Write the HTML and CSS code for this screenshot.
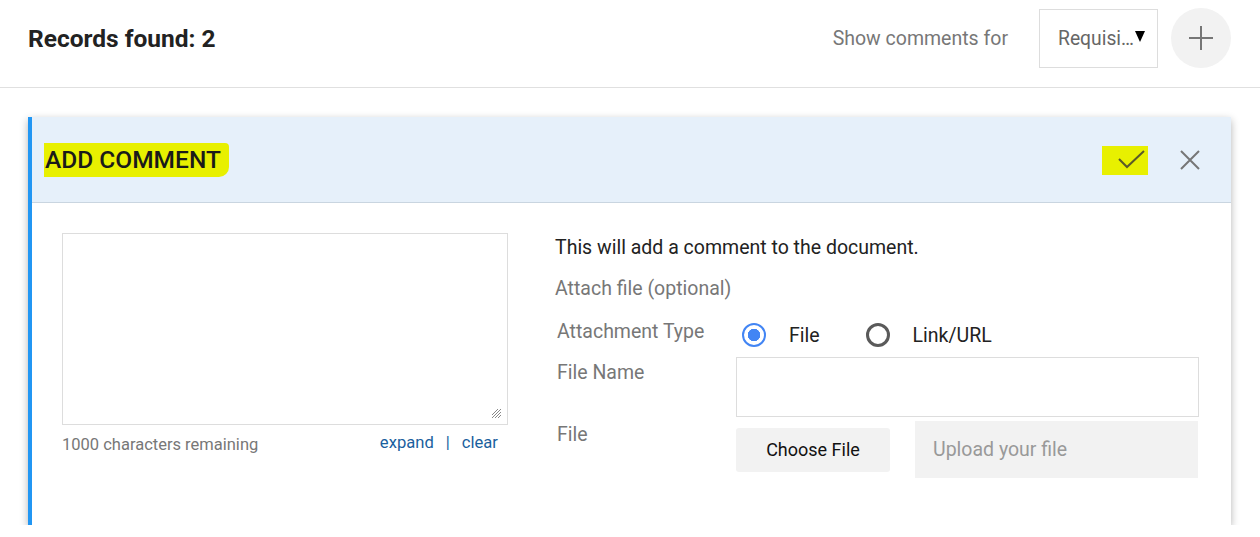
FILE: index.html
```html
<!DOCTYPE html>
<html lang="en">
<head>
  <meta charset="UTF-8" />
  <title>Comments</title>
  <link rel="stylesheet" href="styles.css">
</head>
<body>

  <!-- Top bar -->
  <div class="topbar">
    <h2 class="records">Records found: 2</h2>
    <div class="top-actions">
      <span class="show-label">Show comments for</span>
      <div class="select-box">
        <span class="select-text">Requisi…</span>
        <span class="select-arrow"></span>
      </div>
      <button class="add-btn" aria-label="Add">
        <svg width="26" height="26" viewBox="0 0 26 26"><path d="M13 1v24M1 13h24" stroke="#767676" stroke-width="2" fill="none"/></svg>
      </button>
    </div>
  </div>

  <!-- Add comment card -->
  <div class="card">
    <div class="card-head">
      <span class="card-title"><span class="mark">ADD COMMENT</span></span>
      <div class="card-icons">
        <span class="mark check-mark">
          <svg width="30" height="22" viewBox="0 0 30 22"><path d="M2 10l8 8L27 2" stroke="#5a5a28" stroke-width="2" fill="none"/></svg>
        </span>
        <svg class="close-icon" width="22" height="22" viewBox="0 0 22 22"><path d="M2 2l18 18M20 2L2 20" stroke="#767676" stroke-width="2" fill="none"/></svg>
      </div>
    </div>

    <div class="card-body">
      <div class="comment-col">
        <div class="textarea">
          <svg class="grip" width="12" height="12" viewBox="0 0 12 12"><path d="M11 2L2 11M11 5L5 11M11 8L8 11M8 2L2 8" stroke="#888" stroke-width="1"/></svg>
        </div>
        <div class="comment-foot">
          <span class="remaining">1000 characters remaining</span>
          <span class="links"><a href="#">expand</a><span class="sep">|</span><a href="#">clear</a></span>
        </div>
      </div>

      <div class="attach-col">
        <p class="intro">This will add a comment to the document.</p>
        <p class="optional">Attach file (optional)</p>

        <div class="row type-row">
          <span class="label">Attachment Type</span>
          <div class="radios">
            <span class="radio checked"></span><span class="radio-text">File</span>
            <span class="radio"></span><span class="radio-text">Link/URL</span>
          </div>
        </div>

        <div class="row name-row">
          <span class="label">File Name</span>
          <div class="text-input"></div>
        </div>

        <div class="row file-row">
          <span class="label">File</span>
          <div class="file-controls">
            <button class="choose-btn">Choose File</button>
            <div class="upload-box">Upload your file</div>
          </div>
        </div>
      </div>
    </div>
  </div>

</body>
</html>
```

FILE: styles.css
```css
* {
  box-sizing: border-box;
  margin: 0;
  padding: 0;
  font-family: Roboto, "Liberation Sans", sans-serif;
}
body {
  background-color: #fff;
  color: #222;
}
.topbar {
  height: 88px;
  border-bottom: 1px solid #e0e0e0;
  display: flex;
  align-items: flex-start;
  justify-content: space-between;
  padding: 0 29px 0 28px;
}
.records {
  font-size: 24.5px;
  font-weight: 700;
  color: #222;
  margin-top: 24px;
}
.top-actions {
  display: flex;
  align-items: center;
  height: 60px;
  margin-top: 8px;
}
.show-label {
  font-size: 19.5px;
  color: #777;
  margin-right: 31px;
}
.select-box {
  width: 119px;
  height: 59px;
  border: 1px solid #ddd;
  display: flex;
  align-items: center;
  padding-left: 18px;
  font-size: 19.3px;
  color: #666;
  margin-right: 13px;
}
.select-arrow {
  width: 0;
  height: 0;
  border-left: 5px solid transparent;
  border-right: 5px solid transparent;
  border-top: 11px solid #000;
  margin-left: 1px;
  margin-top: -4px;
}
.add-btn {
  width: 60px;
  height: 60px;
  border-radius: 50%;
  border: none;
  background-color: #f2f2f2;
  display: flex;
  align-items: center;
  justify-content: center;
}
.card {
  margin: 29px 29px 0 28px;
  border-left: 4px solid #2196f3;
  box-shadow: 0 3px 8px rgba(0,0,0,0.3);
  background: #fff;
}
.card-head {
  height: 86px;
  background-color: #e6f0fa;
  border-bottom: 1px solid #c9d5e0;
  display: flex;
  align-items: center;
  justify-content: space-between;
  padding: 0 30px 0 12px;
}
.mark {
  background-color: #e8f000;
}
.card-title .mark {
  display: inline-block;
  font-size: 24.5px;
  font-weight: 500;
  color: #1a1a1a;
  padding: 2px 8px 3px 1px;
  border-radius: 0 4px 10px 0;
}
.card-icons {
  display: flex;
  align-items: center;
}
.check-mark {
  display: flex;
  align-items: center;
  justify-content: center;
  width: 46px;
  height: 29px;
  padding-left: 14px;
  margin-right: 31px;
  margin-top: 1px;
}
.card-body {
  display: flex;
  padding: 30px 30px 47px 30px;
}
.comment-col {
  width: 446px;
}
.textarea {
  height: 192px;
  border: 1px solid #ddd;
  position: relative;
}
.grip {
  position: absolute;
  right: 5px;
  bottom: 5px;
}
.comment-foot {
  display: flex;
  justify-content: space-between;
  margin-top: 8px;
  padding-right: 10px;
}
.remaining {
  font-size: 16.5px;
  color: #777;
  margin-top: 2px;
}
.links {
  font-size: 16.6px;
}
.links a {
  color: #1a5f9e;
  text-decoration: none;
}
.sep {
  color: #1a5f9e;
  margin: 0 12px;
}
.attach-col {
  margin-left: 47px;
  width: 643px;
  padding-top: 3px;
}
.intro {
  font-size: 19.5px;
  line-height: 24px;
  color: #222;
}
.optional {
  font-size: 19.5px;
  line-height: 24px;
  color: #777;
  margin-top: 17px;
}
.row {
  display: grid;
  grid-template-columns: 181px 1fr;
}
.label {
  font-size: 19.5px;
  line-height: 24px;
  color: #777;
  padding-left: 2px;
}
.type-row {
  margin-top: 18px;
  height: 32px;
}
.type-row .label {
  padding-top: 1px;
}
.radios {
  display: flex;
  align-items: center;
  padding-left: 6px;
}
.radio {
  width: 24px;
  height: 24px;
  border-radius: 50%;
  border: 3px solid #5a5a5a;
  margin-right: 23px;
}
.radio.checked {
  border: 2.5px solid #4285f4;
  background: radial-gradient(circle, #4285f4 0 6px, #fff 6.5px);
}
.radio-text {
  font-size: 19.5px;
  color: #222;
  margin-right: 46px;
}
.name-row {
  margin-top: 6px;
}
.name-row .label {
  padding-top: 4px;
}
.text-input {
  height: 60px;
  border: 1px solid #ddd;
  width: 463px;
}
.file-row {
  margin-top: 4px;
}
.file-row .label {
  padding-top: 2px;
}
.file-controls {
  display: flex;
  align-items: center;
}
.choose-btn {
  width: 154px;
  height: 44px;
  border: none;
  border-radius: 3px;
  background-color: #f2f2f2;
  font-size: 18px;
  color: #111;
  margin-right: 25px;
}
.upload-box {
  width: 283px;
  height: 57px;
  background-color: #f2f2f2;
  display: flex;
  align-items: center;
  padding-left: 18px;
  font-size: 19.5px;
  color: #999;
}
```
